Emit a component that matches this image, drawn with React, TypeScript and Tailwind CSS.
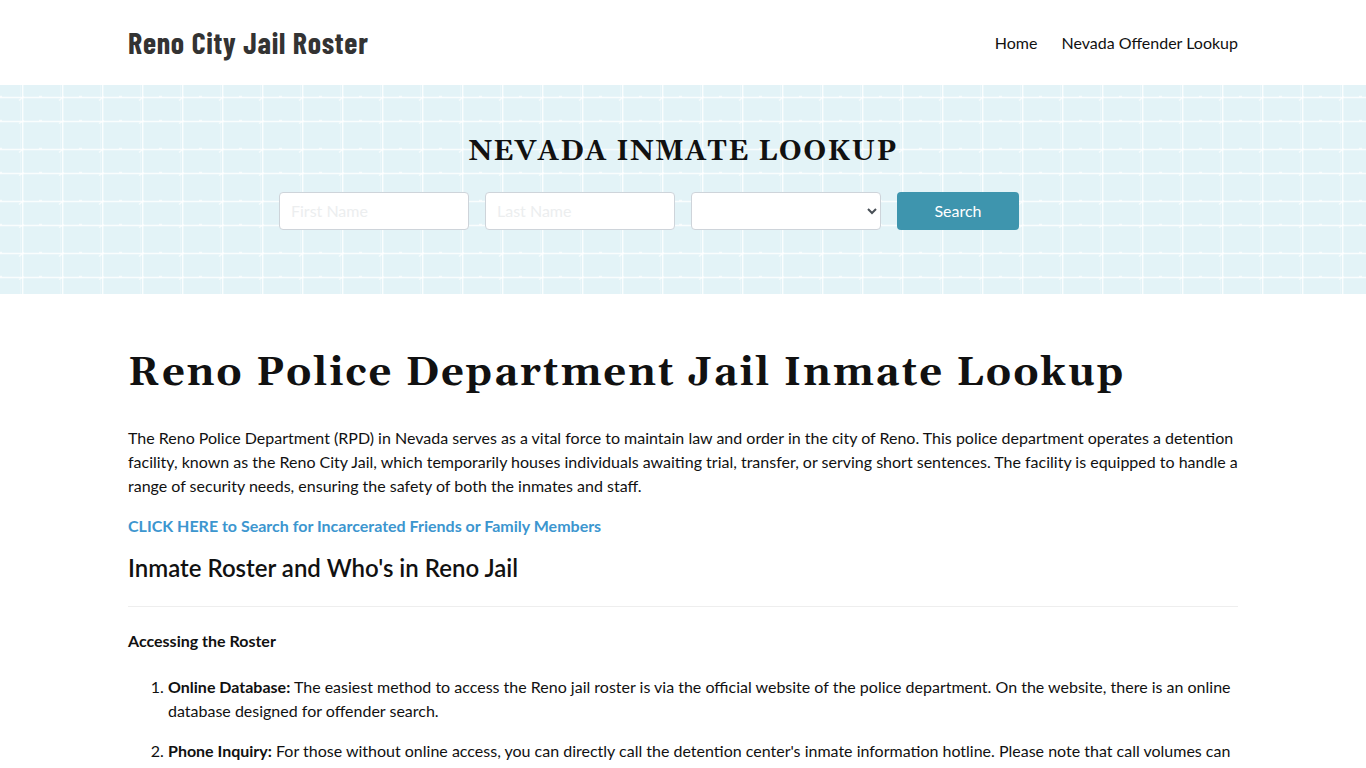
import React from "react";

const navLinks = [
  { label: "Home", href: "#home" },
  { label: "Nevada Offender Lookup", href: "#offender-lookup" },
];

const accessSteps = [
  {
    title: "Online Database",
    text: "The easiest method to access the Reno jail roster is via the official website of the police department. On the website, there is an online database designed for offender search.",
  },
  {
    title: "Phone Inquiry",
    text: "For those without online access, you can directly call the detention center's inmate information hotline. Please note that call volumes can",
  },
];

const fieldClass =
  "h-[38px] w-[190px] rounded border border-[#ced4da] bg-white px-[11px] pb-[2px] text-base text-[#495057] placeholder:text-[#eceeef]";

function TileBackground() {
  return (
    <svg className="absolute inset-0 h-full w-full" aria-hidden="true">
      <defs>
        <pattern id="tiles" width="40" height="52" patternUnits="userSpaceOnUse">
          <g fill="none" stroke="#fff">
            <path d="M0 12.5H40M0 36.5H40" strokeWidth="1.3" strokeOpacity="0.8" />
            <path d="M22.7 0V52" strokeWidth="1.4" strokeOpacity="0.8" />
            <path d="M19 15.5L24 11.5M19 38.5L24 35.5M0 11.5h2M39 11.5h1M0 35.5h2M39 35.5h1" strokeWidth="1.4" strokeOpacity="0.7" />
            <path d="M20.5 0V52" strokeWidth="1" strokeOpacity="0.2" />
          </g>
        </pattern>
      </defs>
      <rect width="100%" height="100%" fill="url(#tiles)" />
    </svg>
  );
}

export default function App() {
  return (
    <div className="min-h-screen bg-white font-['Lato',sans-serif] text-base text-[#111]">
      <header className="mx-auto flex h-[85px] max-w-[1140px] items-center justify-between px-[15px]">
        <a
          href="#home"
          className="pb-0.5 font-['Barlow_Condensed','Roboto_Condensed','Liberation_Sans_Narrow',sans-serif] text-3xl font-bold tracking-wide text-[#333]"
        >
          Reno City Jail Roster
        </a>
        <nav className="flex gap-6">
          {navLinks.map((link) => (
            <a key={link.label} href={link.href}>
              {link.label}
            </a>
          ))}
        </nav>
      </header>

      <section className="relative bg-[#e3f3f7] pt-[50px] pb-16">
        <TileBackground />
        <div className="relative mx-auto max-w-[808px]">
          <h2 className="mb-[22px] text-center font-['Gelasio','Liberation_Serif',serif] text-[28px] leading-[35px] font-bold tracking-wider uppercase">
            Nevada Inmate Lookup
          </h2>
          <form className="flex flex-wrap gap-4" onSubmit={(e) => e.preventDefault()}>
            <input className={fieldClass} type="text" placeholder="First Name" aria-label="First Name" />
            <input className={fieldClass} type="text" placeholder="Last Name" aria-label="Last Name" />
            <select
              className="h-[38px] w-[190px] rounded border border-[#ced4da] bg-white px-2 text-base text-[#495057]"
              aria-label="State"
              defaultValue=""
            >
              <option value=""></option>
              <option value="NV">Nevada</option>
            </select>
            <button type="submit" className="h-[38px] w-[122px] rounded bg-[#3e95ae] text-white">
              Search
            </button>
          </form>
        </div>
      </section>

      <main className="mx-auto max-w-[1140px] px-[15px] pt-[50px]">
        <h1 className="mb-[22px] font-['Gelasio','Liberation_Serif',serif] text-[40px] leading-[60px] font-bold tracking-wider">
          Reno Police Department Jail Inmate Lookup
        </h1>
        <p className="mb-4">
          The Reno Police Department (RPD) in Nevada serves as a vital force to maintain law and order in the city of
          Reno. This police department operates a detention facility, known as the Reno City Jail, which temporarily
          houses individuals awaiting trial, transfer, or serving short sentences. The facility is equipped to handle a
          range of security needs, ensuring the safety of both the inmates and staff.
        </p>
        <p className="mb-4">
          <a href="#search" className="font-bold text-[#3c96cf]">
            CLICK HERE to Search for Incarcerated Friends or Family Members
          </a>
        </p>
        <h2 className="text-2xl leading-7 font-semibold">Inmate Roster and Who's in Reno Jail</h2>
        <hr className="mt-6 mb-[22px] border-[#eee]" />
        <h3 className="mb-[22px] font-bold">Accessing the Roster</h3>
        <ol className="list-decimal space-y-4 pl-10">
          {accessSteps.map((step) => (
            <li key={step.title}>
              <strong className="font-bold">{step.title}:</strong> {step.text}
            </li>
          ))}
        </ol>
      </main>
    </div>
  );
}
